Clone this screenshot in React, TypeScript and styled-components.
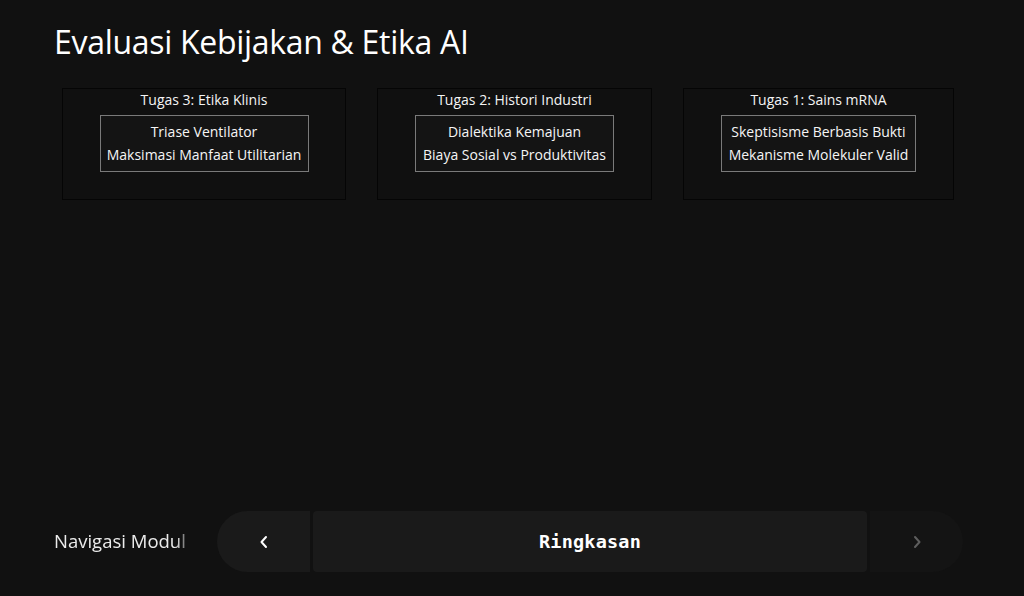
import React from "react";
import styled, { createGlobalStyle } from "styled-components";

const GlobalStyle = createGlobalStyle`
  html, body { margin: 0; padding: 0; background: #111111; }
  body { font-family: "Open Sans", "Noto Sans", sans-serif; color: #f2f2f2; }
  * { box-sizing: border-box; }
`;

const Page = styled.div`
  width: 1024px;
  height: 596px;
  display: flex;
  flex-direction: column;
  padding: 20px 61px 24px 54px;
  background: #111111;
  overflow: hidden;
`;

const Title = styled.h1`
  margin: 0;
  font-family: "Open Sans", sans-serif;
  font-weight: 400;
  font-size: 32px;
  line-height: 44px;
  letter-spacing: -0.3px;
  color: #ffffff;
`;

const CardRow = styled.div`
  flex: 1;
  display: flex;
  align-items: flex-start;
  gap: 31px;
  margin-top: 24px;
  padding-left: 8px;
`;

const Card = styled.section<{ $w: number }>`
  width: ${(p) => p.$w}px;
  height: 112px;
  display: flex;
  flex-direction: column;
  align-items: center;
  border: 1px solid #050505;
  background: #101010;
  padding-top: 1px;
`;

const CardTitle = styled.div`
  font-size: 14px;
  line-height: 19px;
  color: #f4f4f4;
  margin-bottom: 6px;
`;

const Detail = styled.div<{ $w: number }>`
  width: ${(p) => p.$w}px;
  border: 1px solid #7a7a7a;
  background: #141414;
  padding: 4px 0 5px;
  display: flex;
  flex-direction: column;
  align-items: center;
  font-size: 14px;
  line-height: 23px;
  color: #f6f6f6;
  white-space: nowrap;
`;

const NavBar = styled.nav`
  display: flex;
  align-items: center;
  height: 61px;
`;

const NavLabel = styled.div`
  width: 163px;
  font-size: 18.5px;
  line-height: 24px;
  padding-bottom: 2px;
  color: #ececec;
  white-space: nowrap;
  -webkit-mask-image: linear-gradient(to right, #000 122px, rgba(0,0,0,0.45) 131px);
  mask-image: linear-gradient(to right, #000 122px, rgba(0,0,0,0.45) 131px);
`;

const Pill = styled.div`
  flex: 1;
  height: 61px;
  display: flex;
  gap: 3px;
`;

const ArrowButton = styled.button<{ $side: "left" | "right"; $disabled?: boolean }>`
  width: 93px;
  height: 100%;
  border: none;
  padding: 0;
  display: flex;
  align-items: center;
  justify-content: center;
  background: ${(p) => (p.$disabled ? "#141414" : "#1a1a1a")};
  color: ${(p) => (p.$disabled ? "#5e5e5e" : "#ffffff")};
  border-radius: ${(p) => (p.$side === "left" ? "31px 0 0 31px" : "0 31px 31px 0")};
  cursor: ${(p) => (p.$disabled ? "default" : "pointer")};
`;

const Current = styled.div`
  flex: 1;
  height: 100%;
  border-radius: 4px;
  background: #1a1a1a;
  display: flex;
  align-items: center;
  justify-content: center;
  font-family: "DejaVu Sans Mono", "Liberation Mono", monospace;
  font-weight: 700;
  font-size: 18.5px;
  color: #ffffff;
  letter-spacing: 0.2px;
`;

const Chevron = ({ dir }: { dir: "left" | "right" }) => (
  <svg width="10" height="14" viewBox="0 0 10 14" fill="none">
    <path
      d={dir === "left" ? "M7 2 L2.5 7 L7 12" : "M3 2 L7.5 7 L3 12"}
      stroke="currentColor"
      strokeWidth="2"
      strokeLinecap="round"
      strokeLinejoin="round"
    />
  </svg>
);

const tasks = [
  { title: "Tugas 3: Etika Klinis", lines: ["Triase Ventilator", "Maksimasi Manfaat Utilitarian"], w: 284, dw: 209 },
  { title: "Tugas 2: Histori Industri", lines: ["Dialektika Kemajuan", "Biaya Sosial vs Produktivitas"], w: 275, dw: 199 },
  { title: "Tugas 1: Sains mRNA", lines: ["Skeptisisme Berbasis Bukti", "Mekanisme Molekuler Valid"], w: 271, dw: 195 },
];

export default function App() {
  return (
    <>
      <GlobalStyle />
      <Page>
        <Title>Evaluasi Kebijakan &amp; Etika AI</Title>
        <CardRow>
          {tasks.map((t) => (
            <Card key={t.title} $w={t.w}>
              <CardTitle>{t.title}</CardTitle>
              <Detail $w={t.dw}>
                {t.lines.map((l) => (
                  <span key={l}>{l}</span>
                ))}
              </Detail>
            </Card>
          ))}
        </CardRow>
        <NavBar>
          <NavLabel>Navigasi Modul</NavLabel>
          <Pill>
            <ArrowButton $side="left" aria-label="Sebelumnya">
              <Chevron dir="left" />
            </ArrowButton>
            <Current>Ringkasan</Current>
            <ArrowButton $side="right" $disabled aria-label="Berikutnya">
              <Chevron dir="right" />
            </ArrowButton>
          </Pill>
        </NavBar>
      </Page>
    </>
  );
}
